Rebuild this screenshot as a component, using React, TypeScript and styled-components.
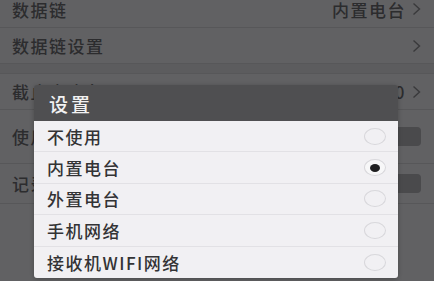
import { createGlobalStyle } from "styled-components";
import styled from "styled-components";

const GlobalStyle = createGlobalStyle`
  html, body {
    margin: 0;
    padding: 0;
    background: #616163;
  }
  body {
    font-family: "Noto Sans CJK SC", "Noto Sans", sans-serif;
  }
`;

const Screen = styled.div`
  position: relative;
  width: 434px;
  height: 281px;
  overflow: hidden;
  background: #616163;
`;

const SettingsList = styled.div`
  display: flex;
  flex-direction: column;
  margin-top: -9px;
`;

const Row = styled.div<{ h: number }>`
  display: flex;
  align-items: center;
  justify-content: space-between;
  height: ${({ h }) => h}px;
  padding: 0 13px 0 12px;
  border-bottom: 1px solid #575759;
  box-sizing: border-box;
  color: #2c2c2e;
  font-size: 17px;
  font-weight: 500;
  letter-spacing: 1.5px;
`;

const SectionGap = styled.div`
  height: 9px;
  background: #5c5c5e;
  border-bottom: 1px solid #575759;
`;

const RowEnd = styled.div`
  display: flex;
  align-items: center;
  gap: 6px;
`;

const Chevron = () => (
  <svg width="9" height="14" viewBox="0 0 9 14">
    <path d="M1.5 1.5 L7.5 7 L1.5 12.5" fill="none" stroke="#3a3a3c" strokeWidth="1.4" />
  </svg>
);

const Switch = styled.div`
  width: 40px;
  height: 19px;
  border-radius: 4px;
  background: #4a4a4c;
`;

const Dialog = styled.div`
  position: absolute;
  left: 34px;
  top: 85px;
  width: 364px;
  border-radius: 3px;
  overflow: hidden;
  box-shadow: 0 1px 4px rgba(0, 0, 0, 0.25);
`;

const DialogTitle = styled.div`
  height: 36px;
  display: flex;
  align-items: center;
  padding-left: 15px;
  background: #4f4f51;
  color: #f2f2f2;
  font-size: 19px;
  font-weight: 500;
  letter-spacing: 3px;
`;

const Options = styled.div`
  background: #f1f0f3;
  display: flex;
  flex-direction: column;
`;

const Option = styled.div<{ last?: boolean }>`
  height: 31.4px;
  box-sizing: border-box;
  display: flex;
  align-items: center;
  justify-content: space-between;
  padding: 0 12px 0 13px;
  color: #333335;
  font-size: 17px;
  font-weight: 500;
  letter-spacing: 1.5px;
  border-bottom: ${({ last }) => (last ? "none" : "1px solid #e2e1e5")};
`;

const Radio = styled.div<{ checked?: boolean }>`
  width: 22px;
  height: 17px;
  border-radius: 50%;
  border: 1px solid #d8d7db;
  box-sizing: border-box;
  display: flex;
  align-items: center;
  justify-content: center;
  background: ${({ checked }) => (checked ? "#f7f7f8" : "transparent")};

  &::after {
    content: "";
    display: ${({ checked }) => (checked ? "block" : "none")};
    width: 10px;
    height: 8px;
    border-radius: 50%;
    background: #1e1e20;
  }
`;

const options = ["不使用", "内置电台", "外置电台", "手机网络", "接收机WIFI网络"];

export default function App() {
  return (
    <>
      <GlobalStyle />
      <Screen>
        <SettingsList>
          <Row h={37}>
            <span>数据链</span>
            <RowEnd>
              <span>内置电台</span>
              <Chevron />
            </RowEnd>
          </Row>
          <Row h={36}>
            <span>数据链设置</span>
            <Chevron />
          </Row>
          <SectionGap />
          <Row h={36}>
            <span>截止高度角</span>
            <RowEnd>
              <span>10</span>
              <Chevron />
            </RowEnd>
          </Row>
          <Row h={54}>
            <span>使用</span>
            <Switch />
          </Row>
          <Row h={40}>
            <span>记录</span>
            <Switch />
          </Row>
        </SettingsList>
        <Dialog>
          <DialogTitle>设置</DialogTitle>
          <Options>
            {options.map((o, i) => (
              <Option key={o} last={i === options.length - 1}>
                <span>{o}</span>
                <Radio checked={i === 1} />
              </Option>
            ))}
          </Options>
        </Dialog>
      </Screen>
    </>
  );
}
